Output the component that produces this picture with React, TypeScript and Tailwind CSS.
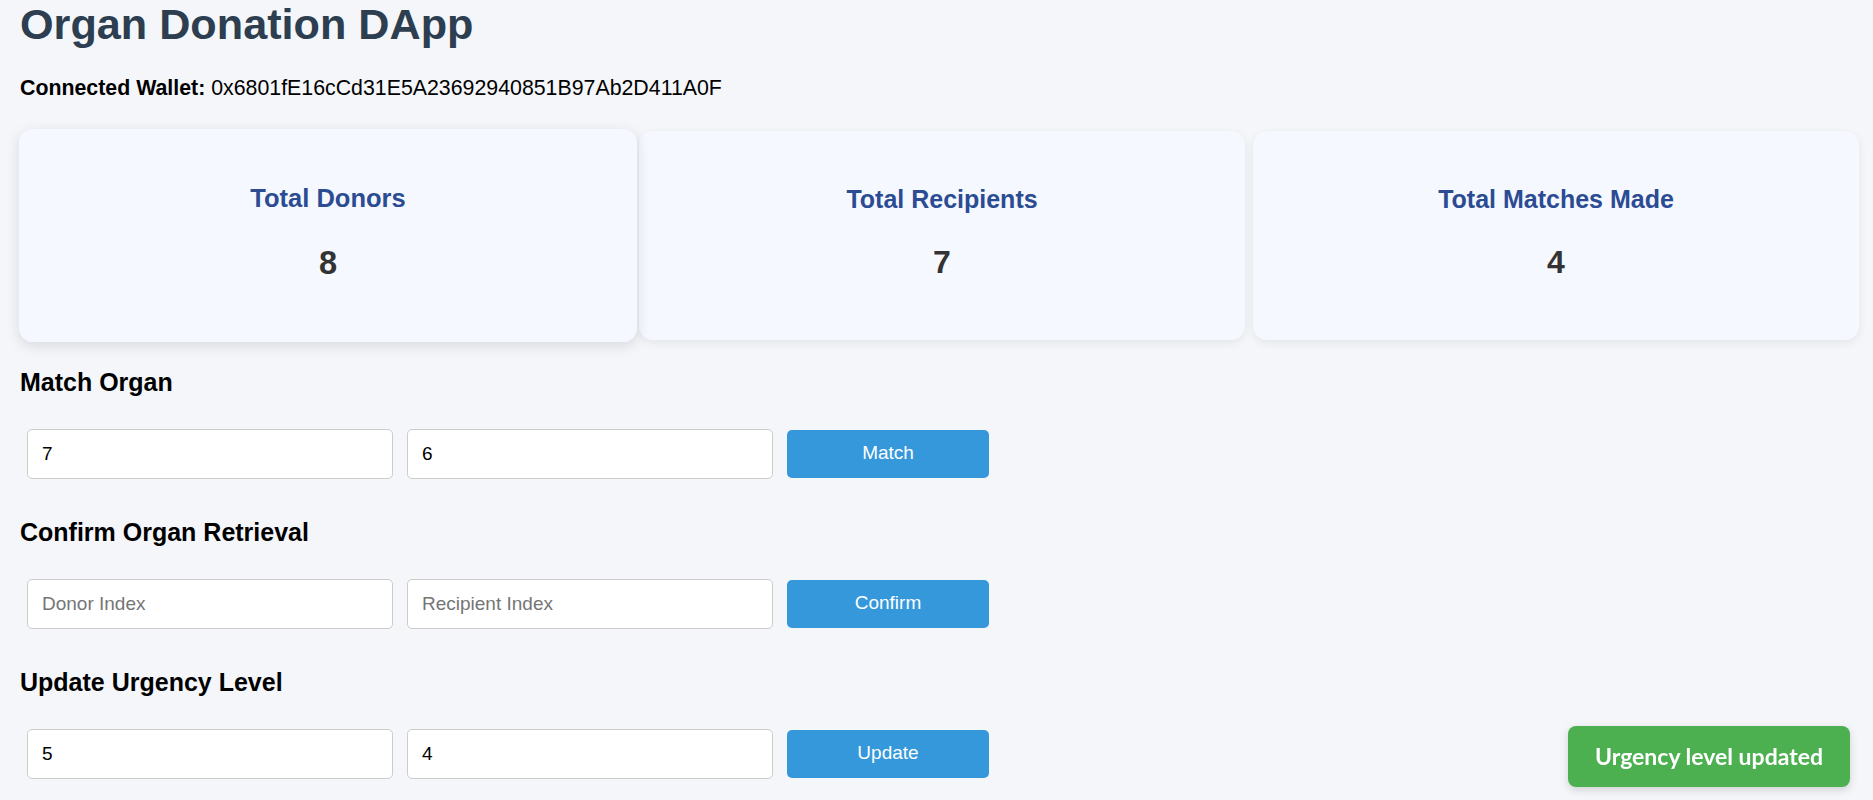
import React from 'react';

const stats = [
  { label: 'Total Donors', value: 8, hovered: true },
  { label: 'Total Recipients', value: 7, hovered: false },
  { label: 'Total Matches Made', value: 4, hovered: false },
];

const sections = [
  { title: 'Match Organ', a: '7', b: '6', action: 'Match' },
  { title: 'Confirm Organ Retrieval', a: '', b: '', action: 'Confirm' },
  { title: 'Update Urgency Level', a: '5', b: '4', action: 'Update' },
];

const StatCard = ({ label, value, hovered }: { label: string; value: number; hovered: boolean }) => (
  <div
    className={
      hovered
        ? 'h-[209px] scale-[1.02] rounded-[14px] bg-[#f5f8fe] pt-[54px] text-center shadow-[0_4px_12px_rgba(0,0,0,0.1)]'
        : 'h-[209px] rounded-[14px] bg-[#f5f8fe] pt-[54px] text-center shadow-[0_3px_10px_rgba(0,0,0,0.07)]'
    }
  >
    <h3 className="text-[25px] font-bold leading-[29px] text-[#2b4c93]">{label}</h3>
    <p className="mt-[30px] text-[32px] font-bold leading-[37px] text-[#333333]">{value}</p>
  </div>
);

export default function App() {
  return (
    <div className="min-h-screen bg-[#f4f6f9] px-[20px] font-['Liberation_Sans',Arial,sans-serif] text-black">
      <h1 className="text-[43.2px] font-bold leading-[49px] text-[#2c3e50]">Organ Donation DApp</h1>

      <p className="mt-[27px] text-[21.33px] leading-[24.5px]">
        <strong>Connected Wallet:</strong> 0x6801fE16cCd31E5A23692940851B97Ab2D411A0F
      </p>

      {/* Stats */}
      <div className="mt-[30px] ml-[5px] grid w-[1834px] grid-cols-3 gap-[8px]">
        {stats.map((s) => (
          <StatCard key={s.label} {...s} />
        ))}
      </div>

      {/* Forms */}
      <div className="mt-[28px] flex flex-col gap-[39px]">
        {sections.map((s) => (
          <section key={s.title}>
            <h3 className="text-[25px] font-bold leading-[29px]">{s.title}</h3>
            <div className="mt-[32px] flex items-center gap-[14px] pl-[7px]">
              <input
                defaultValue={s.a}
                placeholder="Donor Index"
                className="h-[50px] w-[366px] rounded-[5px] border border-[#cccccc] bg-white px-[14px] text-[19px] text-black outline-none placeholder:text-[#757575]"
              />
              <input
                defaultValue={s.b}
                placeholder="Recipient Index"
                className="h-[50px] w-[366px] rounded-[5px] border border-[#cccccc] bg-white px-[14px] text-[19px] text-black outline-none placeholder:text-[#757575]"
              />
              <button className="h-[48px] w-[202px] rounded-[5px] bg-[#3498db] text-[19px] text-white">
                {s.action}
              </button>
            </div>
          </section>
        ))}
      </div>

      {/* Toast */}
      <div className="fixed right-[23px] bottom-[13px] flex h-[61px] w-[282px] items-center justify-center rounded-[8px] bg-[#4caf50] font-['Lato',sans-serif] text-[23px] font-bold text-white shadow-[0_3px_8px_rgba(0,0,0,0.15)]">
        Urgency level updated
      </div>
    </div>
  );
}
